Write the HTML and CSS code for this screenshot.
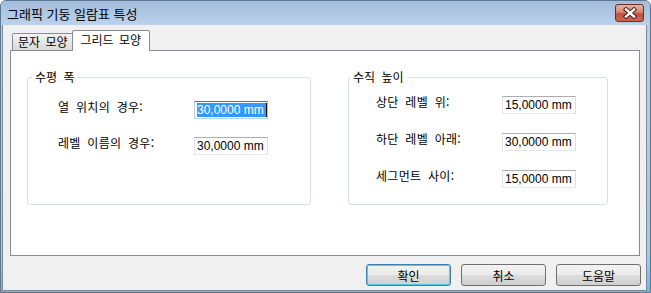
FILE: index.html
```html
<!DOCTYPE html>
<html lang="ko">
<head>
  <meta charset="UTF-8">
  <title>그래픽 기둥 일람표 특성</title>
  <link rel="stylesheet" href="styles.css">
</head>
<body>
  <div class="window">
    <div class="titlebar">
      <span class="title">그래픽 기둥 일람표 특성</span>
      <button class="close">
        <svg width="16" height="12" viewBox="0 0 16 12">
          <path d="M4 2.5 L12 9.5 M12 2.5 L4 9.5" stroke="#4a1d1a" stroke-width="4.4" stroke-linecap="square"/>
          <path d="M4 2.5 L12 9.5 M12 2.5 L4 9.5" stroke="#fff" stroke-width="2.4" stroke-linecap="square"/>
        </svg>
      </button>
    </div>

    <div class="client">
      <div class="tabs">
        <div class="tab">문자 모양</div>
        <div class="tab active">그리드 모양</div>
      </div>

      <div class="panel">
        <div class="group group-left">
          <span class="group-title">수평 폭</span>
          <div class="rows">
            <div class="row">
              <span class="label">열 위치의 경우:</span>
              <div class="field focus"><span class="sel">30,0000 mm</span><span class="caret"></span></div>
            </div>
            <div class="row">
              <span class="label">레벨 이름의 경우:</span>
              <div class="field">30,0000 mm</div>
            </div>
          </div>
        </div>

        <div class="group group-right">
          <span class="group-title">수직 높이</span>
          <div class="rows">
            <div class="row">
              <span class="label">상단 레벨 위:</span>
              <div class="field">15,0000 mm</div>
            </div>
            <div class="row">
              <span class="label">하단 레벨 아래:</span>
              <div class="field">30,0000 mm</div>
            </div>
            <div class="row">
              <span class="label">세그먼트 사이:</span>
              <div class="field">15,0000 mm</div>
            </div>
          </div>
        </div>
      </div>

      <div class="buttons">
        <button class="btn default">확인</button>
        <button class="btn">취소</button>
        <button class="btn">도움말</button>
      </div>
    </div>
  </div>
</body>
</html>
```

FILE: styles.css
```css
/* dialog */
body {
  margin: 0;
  font-family: "Noto Sans CJK KR", "Liberation Sans", sans-serif;
  font-size: 12px;
  color: #000;
}
.window {
  width: 651px;
  height: 293px;
  box-sizing: border-box;
  border: 1px solid #5f7690;
  border-radius: 6px 6px 0 0;
  background: linear-gradient(#a9c3e0, #b9d1ea 30px, #9cc8ea 260px, #6fb5e6);
  display: flex;
  flex-direction: column;
}
.titlebar {
  height: 24px;
  display: flex;
  align-items: flex-start;
  justify-content: space-between;
  background: linear-gradient(#a2bcdb, #bad2eb);
  border-radius: 5px 5px 0 0;
}
.title {
  margin: 4px 0 0 6px;
  font-size: 13px;
  line-height: 17px;
}
.close {
  width: 29px;
  height: 18px;
  margin: 3px 6px 0 0;
  padding: 0;
  border: 1px solid #6b2c28;
  border-radius: 3px;
  background: linear-gradient(#eab0a6, #d8836f 45%, #c2503f 55%, #cc6650);
  display: flex;
  align-items: center;
  justify-content: center;
}
.client {
  flex: 1;
  margin: 0 3px 1px 1px;
  border: 1px solid #7b8a9c;
  border-top: none;
  background: #f0f0f0;
  display: flex;
  flex-direction: column;
}

/* tabs */
.tabs {
  height: 25px;
  display: flex;
  align-items: flex-end;
  padding-left: 9px;
  word-spacing: 2px;
}
.tab {
  height: 16px;
  padding: 0 5px;
  line-height: 16px;
  border: 1px solid #898c95;
  border-bottom: none;
  border-radius: 2px 2px 0 0;
  background: linear-gradient(#f3f3f3, #e6e6e6 50%, #dadada);
}
.tab.active {
  height: 20px;
  margin: 0 0 -1px -2px;
  padding: 0 8px;
  line-height: 18px;
  background: #fff;
  position: relative;
}
.panel {
  height: 206px;
  width: 630px;
  box-sizing: border-box;
  margin-left: 7px;
  border: 1px solid #898c95;
  background: #fff;
  display: flex;
  align-items: flex-start;
  padding: 26px 0 0 16px;
  gap: 37px;
}

/* group boxes */
.group {
  height: 128px;
  box-sizing: border-box;
  border: 1px solid #d5dfe5;
  border-radius: 3px;
  word-spacing: 3px;
}
.group-left {
  width: 284px;
}
.group-right {
  width: 260px;
}
.group-title {
  display: block;
  width: fit-content;
  margin: -8px 0 0 4px;
  padding: 0 3px;
  height: 14px;
  line-height: 14px;
  background: #fff;
}
.group-right .group-title {
  margin-left: 1px;
}
.rows {
  display: flex;
  flex-direction: column;
}
.group-left .rows {
  padding: 17px 0 0 30px;
  gap: 18px;
}
.group-right .rows {
  padding: 12px 0 0 27px;
  gap: 19px;
}
.row {
  display: flex;
  align-items: flex-start;
}
.label {
  line-height: 12px;
  letter-spacing: 0.3px;
}
.group-left .label {
  width: 136px;
}
.group-right .label {
  width: 126px;
}
.field {
  width: 74px;
  height: 18px;
  box-sizing: border-box;
  border: 1px solid;
  border-color: #abadb3 #dbdfe6 #e3e9ef #e2e3ea;
  padding-left: 2px;
  font-family: "Liberation Sans", sans-serif;
  font-size: 12px;
  line-height: 16px;
  word-spacing: 0;
  display: flex;
  align-items: center;
}
.field.focus {
  border-color: #3d7bad #a4c9e3 #b7d9ed #b5cfe7;
}
.sel {
  background: #3399ff;
  color: #fff;
  line-height: 14px;
  padding-right: 2px;
}
.caret {
  width: 1px;
  height: 14px;
  background: #000;
}

/* bottom buttons */
.buttons {
  display: flex;
  justify-content: flex-end;
  gap: 10px;
  margin-top: 8px;
  padding-right: 5px;
}
.btn {
  width: 85px;
  height: 22px;
  padding: 0;
  font-family: "Noto Sans CJK KR", sans-serif;
  font-size: 12px;
  border: 1px solid #707070;
  border-radius: 3px;
  background: linear-gradient(#f2f2f2, #ebebeb 50%, #dddddd 51%, #cfcfcf);
  color: #000;
}
.btn.default {
  border-color: #3c7fb1;
  box-shadow: inset 0 0 0 1px #48d0f7;
}
```
